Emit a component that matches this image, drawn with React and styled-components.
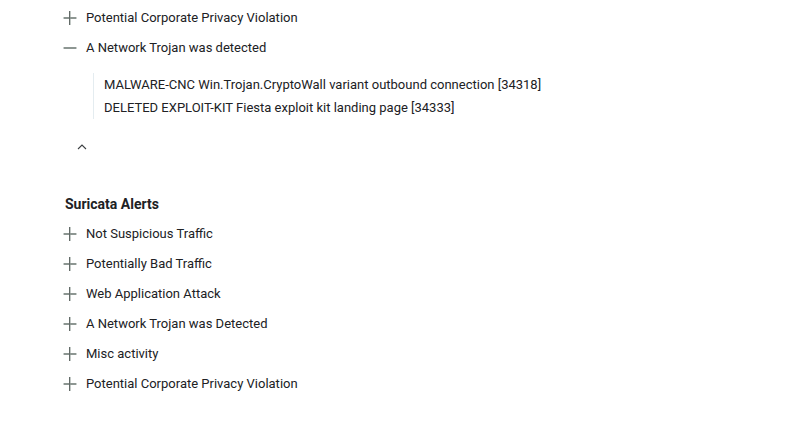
import React, { useState } from "react";
import styled, { createGlobalStyle } from "styled-components";

const GlobalStyle = createGlobalStyle`
  *, *::before, *::after { box-sizing: border-box; }
  body {
    margin: 0;
    background: #fff;
    color: #202124;
    font: 13px/18px Roboto, "Liberation Sans", sans-serif;
  }
`;

const Page = styled.main`
  padding: 3px 24px 12px 63px;
`;

const Group = styled.section`
  & + & { margin-top: 28px; }
`;

const Heading = styled.h2`
  margin: 0;
  padding: 6px 0 6px 2px;
  font-size: 14px;
  line-height: 18px;
  font-weight: 700;
`;

const List = styled.ul`
  margin: 0;
  padding: 0;
  list-style: none;
`;

const Toggle = styled.button`
  display: flex;
  align-items: center;
  gap: 9px;
  height: 30px;
  padding: 0;
  border: 0;
  background: none;
  color: inherit;
  font: inherit;
  text-align: left;
  cursor: pointer;
`;

const Icon = styled.svg`
  display: block;
  flex: none;
  fill: none;
`;

const Details = styled.ul`
  margin: 10px 0 14px 30px;
  padding: 0 0 0 10px;
  border-left: 1px solid #e4ecf0;
  list-style: none;
`;

const Detail = styled.li`
  line-height: 23px;
`;

const Collapse = styled.button`
  display: block;
  margin-left: 12px;
  padding: 7px 0;
  border: 0;
  background: none;
  cursor: pointer;
`;

const SignIcon = ({ open }) => (
  <Icon width="14" height="14" viewBox="0 0 14 14" aria-hidden="true">
    {!open && <path d="M7.5 0V14" stroke="#c3c9c6" />}
    <path d="M1 7H13" stroke="#8d9692" strokeWidth="2" />
    <path d="M0 7H1M13 7H14" stroke="#ccd1cf" strokeWidth="2" />
    {!open && <path d="M6.5 0V14" stroke="#626a67" />}
  </Icon>
);

function Alert({ label, details, initiallyOpen = false }) {
  const [open, setOpen] = useState(initiallyOpen);
  return (
    <li>
      <Toggle type="button" aria-expanded={open} onClick={() => setOpen(!open)}>
        <SignIcon open={open} />
        {label}
      </Toggle>
      {open && details && (
        <Details>
          {details.map((text) => <Detail key={text}>{text}</Detail>)}
        </Details>
      )}
    </li>
  );
}

const trojanDetails = [
  "MALWARE-CNC Win.Trojan.CryptoWall variant outbound connection [34318]",
  "DELETED EXPLOIT-KIT Fiesta exploit kit landing page [34333]",
];

const suricataAlerts = [
  "Not Suspicious Traffic",
  "Potentially Bad Traffic",
  "Web Application Attack",
  "A Network Trojan was Detected",
  "Misc activity",
  "Potential Corporate Privacy Violation",
];

export default function App() {
  return (
    <>
      <GlobalStyle />
      <Page>
        <Group>
          <List>
            <Alert label="Potential Corporate Privacy Violation" />
            <Alert label="A Network Trojan was detected" details={trojanDetails} initiallyOpen />
          </List>
          <Collapse type="button" aria-label="Collapse">
            <Icon width="14" height="14" viewBox="0 0 14 14" aria-hidden="true">
              <path d="M3 9L7 5L11 9" stroke="#3c4043" strokeWidth="1.1" />
            </Icon>
          </Collapse>
        </Group>
        <Group>
          <Heading>Suricata Alerts</Heading>
          <List>
            {suricataAlerts.map((label) => <Alert key={label} label={label} />)}
          </List>
        </Group>
      </Page>
    </>
  );
}
